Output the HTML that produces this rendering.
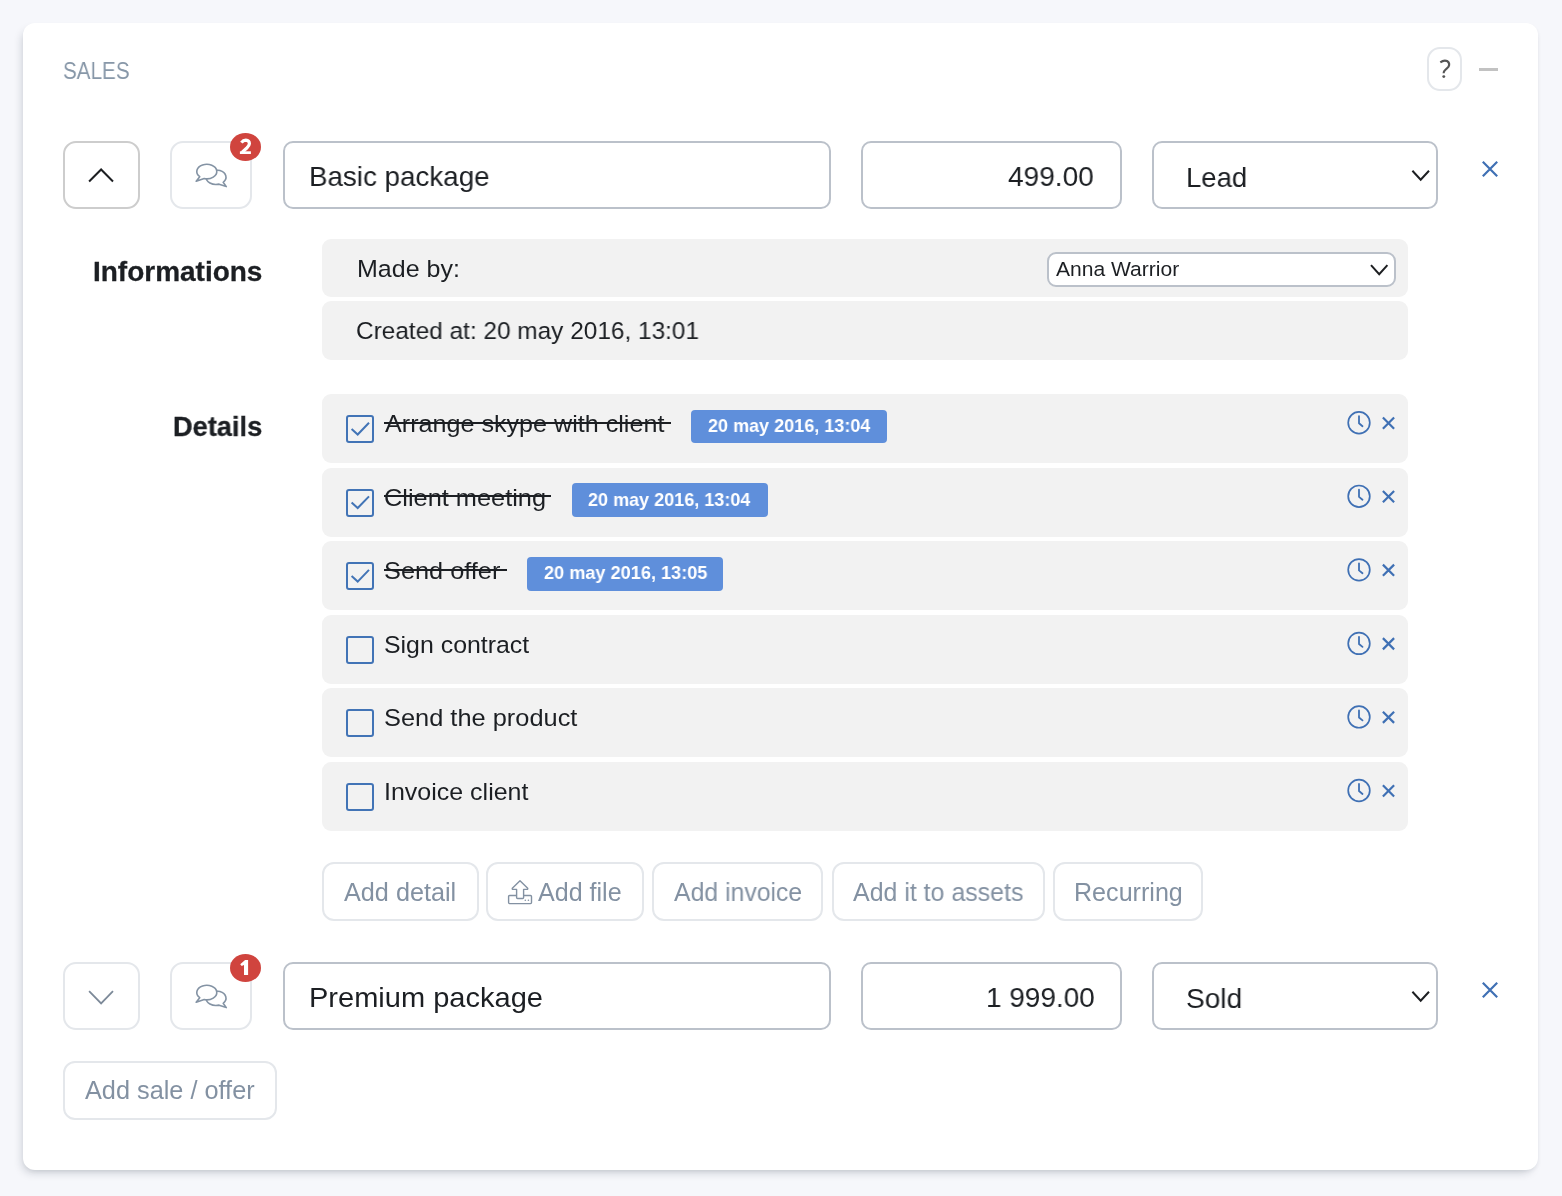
<!DOCTYPE html>
<html><head><meta charset="utf-8"><style>
html,body{margin:0;padding:0;}
body{width:1562px;height:1196px;background:#f6f7fb;position:relative;overflow:hidden;font-family:"Liberation Sans",sans-serif;}
.t{position:absolute;line-height:0;white-space:nowrap;transform-origin:0 0;will-change:transform;}
.b{position:absolute;}
.s{position:absolute;overflow:visible;}
</style></head><body>
<div class="b" style="left:23.00px;top:23.00px;width:1515.00px;height:1147.00px;background:#fff;border-radius:12px;box-shadow:-3px 5px 10px -3px rgba(20,30,50,0.22),1px 2px 4px -1px rgba(20,30,50,0.06);"></div>
<div class="t" style="left:63.00px;top:71.31px;font-size:24.5px;color:#8797a8;transform:scaleX(0.8429);">SALES</div>
<div class="b" style="left:1427.00px;top:47.00px;width:35.00px;height:44.00px;border:2px solid #e4e7eb;border-radius:13px;box-sizing:border-box;"></div>
<svg class="s" style="left:1430px;top:52px" width="30" height="34" viewBox="0 0 30 34"><path d="M10.3 10.4Q14 7.6 17.6 9.3Q20.2 11.3 18.6 14.6Q17.2 16.2 15.2 18Q13.6 19.4 13.6 21.2" fill="none" stroke="#555" stroke-width="2.1" stroke-linecap="butt"/><circle cx="13.8" cy="24.6" r="1.45" fill="#555"/></svg>
<div class="b" style="left:1479.00px;top:68.00px;width:19.00px;height:2.50px;background:#c2c2c2;"></div>
<div class="b" style="left:63.00px;top:141.00px;width:77.00px;height:68.00px;border:2px solid #cdcdcd;border-radius:13px;box-sizing:border-box;"></div>
<svg class="s" style="left:85px;top:165px" width="33" height="21" viewBox="0 0 33 21"><polyline points="4.10,16.50 16.10,4.50 28.00,16.50" fill="none" stroke="#1d1f22" stroke-width="2" stroke-linecap="butt" stroke-linejoin="miter"/></svg>
<div class="b" style="left:169.70px;top:141.00px;width:82.80px;height:68.00px;border:2px solid #e4e7eb;border-radius:13px;box-sizing:border-box;"></div>
<svg class="s" style="left:190px;top:158px" width="45" height="35" viewBox="0 0 45 35"><path d="M29.09 26.15A10 7.25 0 1 1 33.19 24.29L36.3 28.6Z" fill="#fff" stroke="#8493a4" stroke-width="1.6" stroke-linejoin="round"/><path d="M9.73 18.68A10 7.25 0 1 1 14.21 20.55L6.2 23.3Z" fill="#fff" stroke="#8493a4" stroke-width="1.6" stroke-linejoin="round"/></svg>
<div class="b" style="left:230.00px;top:133.00px;width:31.00px;height:28.00px;background:#d0443e;border-radius:50%;"></div>
<svg class="s" style="left:230px;top:133px" width="31" height="28" viewBox="0 0 31 28"><path d="M11.4 9.6Q13.2 7.2 15.8 7.2Q19.4 7.4 19.4 10.6Q19.3 12.6 16.8 15L12 19.4" fill="none" stroke="#fff" stroke-width="3.2" stroke-linejoin="round"/><rect x="9.9" y="18.3" width="11" height="2.7" fill="#fff"/></svg>
<div class="b" style="left:283.00px;top:141.00px;width:548.00px;height:68.00px;border:2px solid #bbc1ca;border-radius:10px;box-sizing:border-box;background:#fff;"></div>
<div class="t" style="left:309.00px;top:176.42px;font-size:28.5px;color:#1c1f23;transform:scaleX(0.9741);">Basic package</div>
<div class="b" style="left:861.00px;top:141.00px;width:261.00px;height:68.00px;border:2px solid #bbc1ca;border-radius:10px;box-sizing:border-box;background:#fff;"></div>
<div class="t" style="left:1008.20px;top:176.42px;font-size:28.5px;color:#1c1f23;transform:scaleX(0.9846);">499.00</div>
<div class="b" style="left:1152.00px;top:141.00px;width:286.00px;height:68.00px;border:2px solid #bbc1ca;border-radius:10px;box-sizing:border-box;background:#fff;"></div>
<div class="t" style="left:1186.00px;top:177.12px;font-size:28.5px;color:#1c1f23;transform:scaleX(0.9651);">Lead</div>
<svg class="s" style="left:1408px;top:166px" width="26" height="18" viewBox="0 0 26 18"><polyline points="4.40,4.80 12.70,13.80 21.00,4.80" fill="none" stroke="#1d1f22" stroke-width="2" stroke-linecap="butt" stroke-linejoin="miter"/></svg>
<svg class="s" style="left:1478px;top:157px" width="23" height="23" viewBox="0 0 23 23"><path d="M4.80 4.80L19.20 19.20M19.20 4.80L4.80 19.20" stroke="#3f70b4" stroke-width="2.2" stroke-linecap="butt"/></svg>
<div class="t" style="left:93.20px;top:271.67px;font-size:27.5px;font-weight:bold;color:#1c1f23;transform:scaleX(1.0173);margin-top:0.7px;-webkit-text-stroke:0.3px #1c1f23;">Informations</div>
<div class="b" style="left:322.00px;top:239.00px;width:1086.00px;height:58.00px;background:#f2f2f2;border-radius:9px;"></div>
<div class="t" style="left:356.60px;top:268.91px;font-size:24.5px;color:#1c1f23;transform:scaleX(1.0203);">Made by:</div>
<div class="b" style="left:1046.50px;top:251.50px;width:349.50px;height:35.50px;border:2px solid #bbc1ca;border-radius:9px;box-sizing:border-box;background:#fff;"></div>
<div class="t" style="left:1056.40px;top:269.10px;font-size:20.5px;color:#1c1f23;transform:scaleX(1.0269);">Anna Warrior</div>
<svg class="s" style="left:1367px;top:261px" width="25" height="18" viewBox="0 0 25 18"><polyline points="4.00,4.20 12.20,13.20 20.40,4.20" fill="none" stroke="#1d1f22" stroke-width="2" stroke-linecap="butt" stroke-linejoin="miter"/></svg>
<div class="b" style="left:322.00px;top:301.00px;width:1086.00px;height:59.00px;background:#f2f2f2;border-radius:9px;"></div>
<div class="t" style="left:356.00px;top:331.41px;font-size:24.5px;color:#1c1f23;transform:scaleX(0.9954);">Created at: 20 may 2016, 13:01</div>
<div class="t" style="left:172.60px;top:426.27px;font-size:27.5px;font-weight:bold;color:#1c1f23;transform:scaleX(0.9889);margin-top:0.9px;-webkit-text-stroke:0.3px #1c1f23;">Details</div>
<div class="b" style="left:322.00px;top:394.20px;width:1086.00px;height:68.80px;background:#f2f2f2;border-radius:9px;"></div>
<div class="b" style="left:346.00px;top:415.20px;width:28.00px;height:28.00px;border:2px solid #4274b6;border-radius:3px;box-sizing:border-box;"></div>
<svg class="s" style="left:346px;top:415px" width="28" height="30" viewBox="0 0 28 30"><polyline points="5.6,13.90 11.7,19.50 23,7.80" fill="none" stroke="#4274b6" stroke-width="2"/></svg>
<div class="t" style="left:385.00px;top:423.71px;font-size:24.5px;color:#1c1f23;transform:scaleX(1.0258);">Arrange skype with client</div>
<div class="b" style="left:383.80px;top:421.80px;width:287.20px;height:2.00px;background:#1c1f23;"></div>
<div class="b" style="left:691.30px;top:409.80px;width:196.00px;height:33.70px;background:#5f8fdb;border-radius:4px;"></div>
<div class="t" style="left:707.80px;top:425.62px;font-size:19px;font-weight:bold;color:#fff;transform:scaleX(0.9489);">20 may 2016, 13:04</div>
<svg class="s" style="left:1345px;top:408px" width="30" height="30" viewBox="0 0 30 30"><circle cx="14" cy="14.75" r="10.8" fill="none" stroke="#3f70b4" stroke-width="1.7"/><polyline points="14,8.20 14,15.30 17.5,18.20" fill="none" stroke="#3f70b4" stroke-width="1.8" stroke-linecap="round" stroke-linejoin="round"/></svg>
<svg class="s" style="left:1378px;top:413px" width="20" height="20" viewBox="0 0 20 20"><path d="M4.90 4.50L16.10 15.70M16.10 4.50L4.90 15.70" stroke="#3f70b4" stroke-width="2.2" stroke-linecap="butt"/></svg>
<div class="b" style="left:322.00px;top:467.75px;width:1086.00px;height:68.80px;background:#f2f2f2;border-radius:9px;"></div>
<div class="b" style="left:346.00px;top:488.75px;width:28.00px;height:28.00px;border:2px solid #4274b6;border-radius:3px;box-sizing:border-box;"></div>
<svg class="s" style="left:346px;top:488px" width="28" height="30" viewBox="0 0 28 30"><polyline points="5.6,14.45 11.7,20.05 23,8.35" fill="none" stroke="#4274b6" stroke-width="2"/></svg>
<div class="t" style="left:384.00px;top:498.26px;font-size:24.5px;color:#1c1f23;transform:scaleX(1.0344);">Client meeting</div>
<div class="b" style="left:383.80px;top:495.35px;width:167.50px;height:2.00px;background:#1c1f23;"></div>
<div class="b" style="left:571.60px;top:483.35px;width:196.00px;height:33.70px;background:#5f8fdb;border-radius:4px;"></div>
<div class="t" style="left:588.40px;top:500.17px;font-size:19px;font-weight:bold;color:#fff;transform:scaleX(0.9489);">20 may 2016, 13:04</div>
<svg class="s" style="left:1345px;top:481px" width="30" height="30" viewBox="0 0 30 30"><circle cx="14" cy="15.30" r="10.8" fill="none" stroke="#3f70b4" stroke-width="1.7"/><polyline points="14,8.75 14,15.85 17.5,18.75" fill="none" stroke="#3f70b4" stroke-width="1.8" stroke-linecap="round" stroke-linejoin="round"/></svg>
<svg class="s" style="left:1378px;top:487px" width="20" height="20" viewBox="0 0 20 20"><path d="M4.90 4.05L16.10 15.25M16.10 4.05L4.90 15.25" stroke="#3f70b4" stroke-width="2.2" stroke-linecap="butt"/></svg>
<div class="b" style="left:322.00px;top:541.30px;width:1086.00px;height:68.80px;background:#f2f2f2;border-radius:9px;"></div>
<div class="b" style="left:346.00px;top:562.30px;width:28.00px;height:28.00px;border:2px solid #4274b6;border-radius:3px;box-sizing:border-box;"></div>
<svg class="s" style="left:346px;top:562px" width="28" height="30" viewBox="0 0 28 30"><polyline points="5.6,14.00 11.7,19.60 23,7.90" fill="none" stroke="#4274b6" stroke-width="2"/></svg>
<div class="t" style="left:384.00px;top:570.81px;font-size:24.5px;color:#1c1f23;transform:scaleX(1.0334);">Send offer</div>
<div class="b" style="left:383.80px;top:568.90px;width:123.20px;height:2.00px;background:#1c1f23;"></div>
<div class="b" style="left:527.30px;top:556.90px;width:196.00px;height:33.70px;background:#5f8fdb;border-radius:4px;"></div>
<div class="t" style="left:543.80px;top:572.72px;font-size:19px;font-weight:bold;color:#fff;transform:scaleX(0.9548);">20 may 2016, 13:05</div>
<svg class="s" style="left:1345px;top:555px" width="30" height="30" viewBox="0 0 30 30"><circle cx="14" cy="14.85" r="10.8" fill="none" stroke="#3f70b4" stroke-width="1.7"/><polyline points="14,8.30 14,15.40 17.5,18.30" fill="none" stroke="#3f70b4" stroke-width="1.8" stroke-linecap="round" stroke-linejoin="round"/></svg>
<svg class="s" style="left:1378px;top:560px" width="20" height="20" viewBox="0 0 20 20"><path d="M4.90 4.60L16.10 15.80M16.10 4.60L4.90 15.80" stroke="#3f70b4" stroke-width="2.2" stroke-linecap="butt"/></svg>
<div class="b" style="left:322.00px;top:614.85px;width:1086.00px;height:68.80px;background:#f2f2f2;border-radius:9px;"></div>
<div class="b" style="left:346.00px;top:635.85px;width:28.00px;height:28.00px;border:2px solid #4274b6;border-radius:3px;box-sizing:border-box;"></div>
<div class="t" style="left:384.00px;top:645.36px;font-size:24.5px;color:#1c1f23;transform:scaleX(1.0153);">Sign contract</div>
<svg class="s" style="left:1345px;top:628px" width="30" height="30" viewBox="0 0 30 30"><circle cx="14" cy="15.40" r="10.8" fill="none" stroke="#3f70b4" stroke-width="1.7"/><polyline points="14,8.85 14,15.95 17.5,18.85" fill="none" stroke="#3f70b4" stroke-width="1.8" stroke-linecap="round" stroke-linejoin="round"/></svg>
<svg class="s" style="left:1378px;top:634px" width="20" height="20" viewBox="0 0 20 20"><path d="M4.90 4.15L16.10 15.35M16.10 4.15L4.90 15.35" stroke="#3f70b4" stroke-width="2.2" stroke-linecap="butt"/></svg>
<div class="b" style="left:322.00px;top:688.40px;width:1086.00px;height:68.80px;background:#f2f2f2;border-radius:9px;"></div>
<div class="b" style="left:346.00px;top:709.40px;width:28.00px;height:28.00px;border:2px solid #4274b6;border-radius:3px;box-sizing:border-box;"></div>
<div class="t" style="left:384.00px;top:717.91px;font-size:24.5px;color:#1c1f23;transform:scaleX(1.0363);">Send the product</div>
<svg class="s" style="left:1345px;top:702px" width="30" height="30" viewBox="0 0 30 30"><circle cx="14" cy="14.95" r="10.8" fill="none" stroke="#3f70b4" stroke-width="1.7"/><polyline points="14,8.40 14,15.50 17.5,18.40" fill="none" stroke="#3f70b4" stroke-width="1.8" stroke-linecap="round" stroke-linejoin="round"/></svg>
<svg class="s" style="left:1378px;top:707px" width="20" height="20" viewBox="0 0 20 20"><path d="M4.90 4.70L16.10 15.90M16.10 4.70L4.90 15.90" stroke="#3f70b4" stroke-width="2.2" stroke-linecap="butt"/></svg>
<div class="b" style="left:322.00px;top:761.95px;width:1086.00px;height:68.80px;background:#f2f2f2;border-radius:9px;"></div>
<div class="b" style="left:346.00px;top:782.95px;width:28.00px;height:28.00px;border:2px solid #4274b6;border-radius:3px;box-sizing:border-box;"></div>
<div class="t" style="left:384.00px;top:792.46px;font-size:24.5px;color:#1c1f23;transform:scaleX(1.0197);">Invoice client</div>
<svg class="s" style="left:1345px;top:775px" width="30" height="30" viewBox="0 0 30 30"><circle cx="14" cy="15.50" r="10.8" fill="none" stroke="#3f70b4" stroke-width="1.7"/><polyline points="14,8.95 14,16.05 17.5,18.95" fill="none" stroke="#3f70b4" stroke-width="1.8" stroke-linecap="round" stroke-linejoin="round"/></svg>
<svg class="s" style="left:1378px;top:781px" width="20" height="20" viewBox="0 0 20 20"><path d="M4.90 4.25L16.10 15.45M16.10 4.25L4.90 15.45" stroke="#3f70b4" stroke-width="2.2" stroke-linecap="butt"/></svg>
<div class="b" style="left:322.00px;top:862.00px;width:157.00px;height:59.00px;border:2px solid #e4e7eb;border-radius:12px;box-sizing:border-box;"></div>
<div class="t" style="left:344.00px;top:892.44px;font-size:25px;color:#8391a2;transform:scaleX(1.0091);">Add detail</div>
<div class="b" style="left:486.30px;top:862.00px;width:158.20px;height:59.00px;border:2px solid #e4e7eb;border-radius:12px;box-sizing:border-box;"></div>
<div class="t" style="left:538.20px;top:892.44px;font-size:25px;color:#8391a2;transform:scaleX(1.0027);">Add file</div>
<div class="b" style="left:652.00px;top:862.00px;width:171.00px;height:59.00px;border:2px solid #e4e7eb;border-radius:12px;box-sizing:border-box;"></div>
<div class="t" style="left:673.80px;top:892.44px;font-size:25px;color:#8391a2;transform:scaleX(0.9919);">Add invoice</div>
<div class="b" style="left:831.60px;top:862.00px;width:213.10px;height:59.00px;border:2px solid #e4e7eb;border-radius:12px;box-sizing:border-box;"></div>
<div class="t" style="left:852.60px;top:892.44px;font-size:25px;color:#8391a2;transform:scaleX(0.9969);">Add it to assets</div>
<div class="b" style="left:1053.00px;top:862.00px;width:150.30px;height:59.00px;border:2px solid #e4e7eb;border-radius:12px;box-sizing:border-box;"></div>
<div class="t" style="left:1074.40px;top:892.44px;font-size:25px;color:#8391a2;transform:scaleX(1.0039);">Recurring</div>
<svg class="s" style="left:506px;top:878px" width="30" height="30" viewBox="0 0 30 30"><g fill="none" stroke="#8391a2" stroke-width="1.4" stroke-linejoin="round"><path d="M14 2.7L6.3 10.2Q6 11.4 7 11.4L10.6 11.4L10.6 19.5Q10.6 20.5 11.6 20.5L16.6 20.5Q17.6 20.5 17.6 19.5L17.6 11.4L21 11.4Q22 11.4 21.7 10.2Z"/><path d="M10.6 17.5L3.6 17.5Q2.6 17.5 2.6 18.5L2.6 24.6Q2.6 25.6 3.6 25.6L24.5 25.6Q25.5 25.6 25.5 24.6L25.5 18.5Q25.5 17.5 24.5 17.5L17.6 17.5"/></g><circle cx="19.3" cy="22.3" r="0.8" fill="#8391a2"/><circle cx="22.4" cy="22.3" r="0.8" fill="#8391a2"/></svg>
<div class="b" style="left:63.00px;top:962.00px;width:77.00px;height:68.00px;border:2px solid #e4e7eb;border-radius:13px;box-sizing:border-box;"></div>
<svg class="s" style="left:85px;top:987px" width="33" height="21" viewBox="0 0 33 21"><polyline points="4.10,4.20 16.10,16.50 28.00,4.20" fill="none" stroke="#7d8a99" stroke-width="1.8" stroke-linecap="butt" stroke-linejoin="miter"/></svg>
<div class="b" style="left:169.70px;top:962.00px;width:82.80px;height:68.00px;border:2px solid #e4e7eb;border-radius:13px;box-sizing:border-box;"></div>
<svg class="s" style="left:190px;top:979px" width="45" height="35" viewBox="0 0 45 35"><path d="M29.09 26.15A10 7.25 0 1 1 33.19 24.29L36.3 28.6Z" fill="#fff" stroke="#8493a4" stroke-width="1.6" stroke-linejoin="round"/><path d="M9.73 18.68A10 7.25 0 1 1 14.21 20.55L6.2 23.3Z" fill="#fff" stroke="#8493a4" stroke-width="1.6" stroke-linejoin="round"/></svg>
<div class="b" style="left:230.00px;top:954.00px;width:31.00px;height:28.00px;background:#d0443e;border-radius:50%;"></div>
<svg class="s" style="left:230px;top:954px" width="31" height="28" viewBox="0 0 31 28"><path d="M15.1 6L18.1 6L18.1 21.1L14 21.1L14 11L11.7 12.1L10.2 10.2Z" fill="#fff"/></svg>
<div class="b" style="left:283.00px;top:962.00px;width:548.00px;height:68.00px;border:2px solid #bbc1ca;border-radius:10px;box-sizing:border-box;background:#fff;"></div>
<div class="t" style="left:309.00px;top:997.42px;font-size:28.5px;color:#1c1f23;transform:scaleX(1.0187);">Premium package</div>
<div class="b" style="left:861.00px;top:962.00px;width:261.00px;height:68.00px;border:2px solid #bbc1ca;border-radius:10px;box-sizing:border-box;background:#fff;"></div>
<div class="t" style="left:985.60px;top:997.42px;font-size:28.5px;color:#1c1f23;transform:scaleX(0.9807);">1 999.00</div>
<div class="b" style="left:1152.00px;top:962.00px;width:286.00px;height:68.00px;border:2px solid #bbc1ca;border-radius:10px;box-sizing:border-box;background:#fff;"></div>
<div class="t" style="left:1186.00px;top:998.12px;font-size:28.5px;color:#1c1f23;transform:scaleX(0.9847);">Sold</div>
<svg class="s" style="left:1408px;top:987px" width="26" height="18" viewBox="0 0 26 18"><polyline points="4.40,4.80 12.70,13.80 21.00,4.80" fill="none" stroke="#1d1f22" stroke-width="2" stroke-linecap="butt" stroke-linejoin="miter"/></svg>
<svg class="s" style="left:1478px;top:978px" width="23" height="23" viewBox="0 0 23 23"><path d="M4.80 4.80L19.20 19.20M19.20 4.80L4.80 19.20" stroke="#3f70b4" stroke-width="2.2" stroke-linecap="butt"/></svg>
<div class="b" style="left:63.00px;top:1060.50px;width:213.50px;height:59.00px;border:2px solid #e4e7eb;border-radius:12px;box-sizing:border-box;"></div>
<div class="t" style="left:85.00px;top:1090.24px;font-size:25px;color:#8391a2;transform:scaleX(1.0114);">Add sale / offer</div>
</body></html>
